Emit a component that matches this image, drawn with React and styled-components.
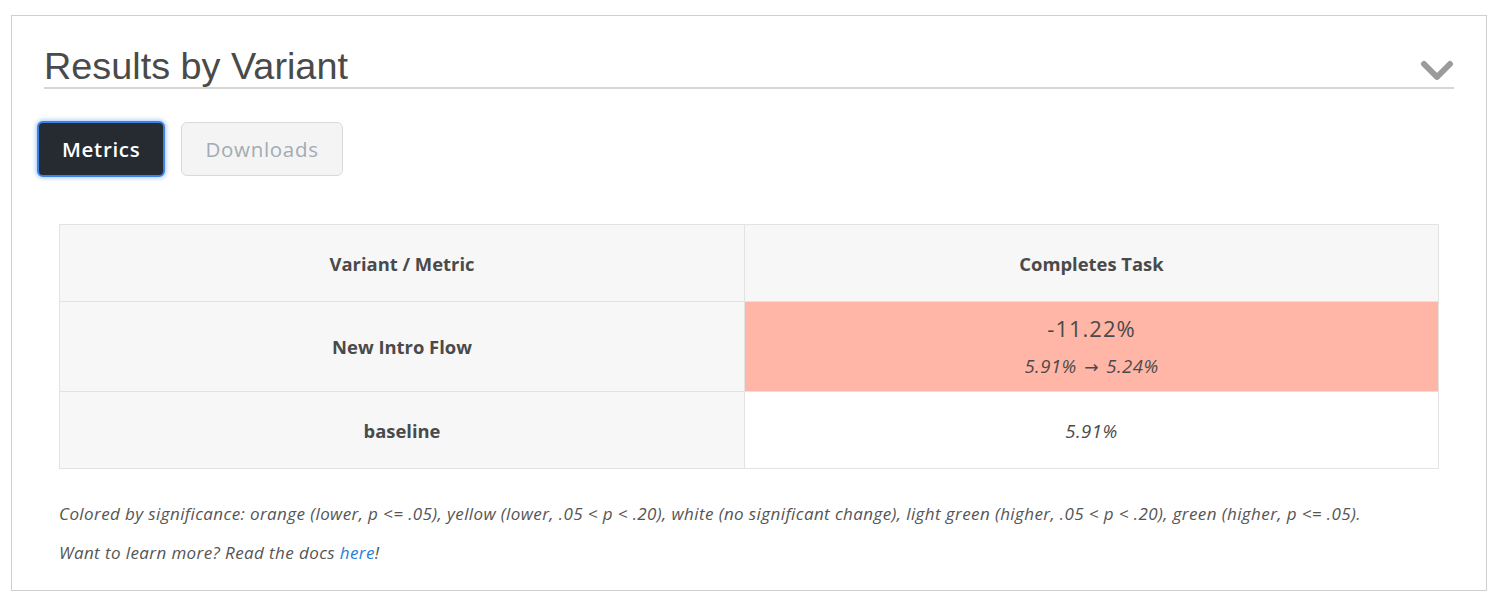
import React, { useState } from 'react'
import styled, { createGlobalStyle } from 'styled-components'

const GlobalStyle = createGlobalStyle`
  html, body {
    margin: 0;
    padding: 0;
    background: #fff;
  }
  body {
    font-family: "Open Sans", "Liberation Sans", sans-serif;
    color: #4a4a4a;
  }
`

const Page = styled.div`
  padding: 15px 13px 0 11px;
`

const Panel = styled.section`
  border: 1px solid #cfcfcf;
  padding: 30px 32px 0 25px;
  height: 576px;
  box-sizing: border-box;
`

const Header = styled.div`
  display: flex;
  align-items: flex-end;
  justify-content: space-between;
  border-bottom: 2px solid #d6d6d6;
  margin-left: 7px;
  height: 41px;
`

const Title = styled.h2`
  margin: 0;
  font-family: "Liberation Sans", Arial, sans-serif;
  font-weight: 400;
  font-size: 37.8px;
  line-height: 1;
  color: #4a4a4a;
  padding-bottom: 1px;
`

const Toggle = styled.button`
  border: 0;
  background: none;
  padding: 0;
  margin: 0 0 5px 0;
  cursor: pointer;
  display: flex;
`

const Tabs = styled.div`
  display: flex;
  gap: 16px;
  margin-top: 32px;
`

const Tab = styled.button`
  height: ${p => (p.$active ? '56px' : '54px')};
  box-sizing: border-box;
  padding: 0 23px;
  border-radius: 6px;
  font-family: "Open Sans", sans-serif;
  font-size: 20.5px;
  font-weight: ${p => (p.$active ? 600 : 400)};
  letter-spacing: 0.7px;
  cursor: pointer;
  background: ${p => (p.$active ? '#262a31' : '#f4f4f4')};
  color: ${p => (p.$active ? '#ffffff' : '#a3abb3')};
  border: ${p => (p.$active ? '2px solid #3b82e6' : '1px solid #d9d9d9')};
  box-shadow: ${p => (p.$active ? '0 0 4px 1px rgba(59,130,230,0.45)' : 'none')};
  margin-top: ${p => (p.$active ? '0' : '1px')};
`

const TableWrap = styled.div`
  margin: 47px 15px 0 22px;
`

const Table = styled.table`
  width: 100%;
  border-collapse: collapse;
  table-layout: fixed;
  border: 1px solid #e3e3e3;
`

const Col = styled.col`
  width: ${p => p.$w};
`

const Cell = styled.td`
  border: 1px solid #e3e3e3;
  text-align: center;
  vertical-align: middle;
  height: ${p => p.$h}px;
  padding: 0;
  background: ${p => p.$bg || '#fff'};
  font-size: ${p => (p.$italic ? '18.5px' : '18.4px')};
  font-weight: ${p => (p.$bold ? 700 : 400)};
  font-style: ${p => (p.$italic ? 'italic' : 'normal')};
  letter-spacing: ${p => (p.$italic ? '0.5px' : '0')};
  color: #4a4a4a;
`

const Change = styled.div`
  font-size: 22px;
  line-height: 1;
  margin-bottom: 18px;
  letter-spacing: 1px;
`

const Rates = styled.div`
  font-size: 18.5px;
  font-style: italic;
  line-height: 1;
  letter-spacing: 0.5px;
`

const Arrow = styled.span`
  font-family: "DejaVu Sans", sans-serif;
  font-style: normal;
  font-size: 17px;
  margin: 0 2px;
`

const Notes = styled.div`
  margin: 25px 0 0 22px;
  font-family: "Open Sans", sans-serif;
  font-style: italic;
  font-size: 17px;
  letter-spacing: 0.4px;
  color: #555;
  line-height: 39px;
`

const Note = styled.p`
  margin: 0;
  white-space: nowrap;
`

const DocLink = styled.a`
  color: #1f7ed8;
  text-decoration: none;
`

const Chevron = () => (
  <svg width="34" height="22" viewBox="0 0 34 22">
    <path d="M4 4 L17 17 L30 4" fill="none" stroke="#9b9b9b" strokeWidth="6" strokeLinecap="round" strokeLinejoin="round" />
  </svg>
)

const rows = [
  { name: 'New Intro Flow', change: '-11.22%', from: '5.91%', to: '5.24%', bg: '#ffb6a7', h: 89 },
  { name: 'baseline', value: '5.91%', h: 76 },
]

const App = () => {
  const [tab, setTab] = useState('metrics')

  return (
    <Page>
      <GlobalStyle />
      <Panel>
        <Header>
          <Title>Results by Variant</Title>
          <Toggle aria-label="collapse"><Chevron /></Toggle>
        </Header>
        <Tabs>
          <Tab $active={tab === 'metrics'} onClick={() => setTab('metrics')}>Metrics</Tab>
          <Tab $active={tab === 'downloads'} onClick={() => setTab('downloads')}>Downloads</Tab>
        </Tabs>
        <TableWrap>
          <Table>
            <colgroup>
              <Col $w="685px" />
              <Col $w="auto" />
            </colgroup>
            <tbody>
              <tr>
                <Cell as="th" $h={76} $bg="#f7f7f7" $bold>Variant / Metric</Cell>
                <Cell as="th" $h={76} $bg="#f7f7f7" $bold>Completes Task</Cell>
              </tr>
              {rows.map(r => (
                <tr key={r.name}>
                  <Cell $h={r.h} $bg="#f7f7f7" $bold>{r.name}</Cell>
                  {r.change ? (
                    <Cell $h={r.h} $bg={r.bg}>
                      <Change>{r.change}</Change>
                      <Rates>{r.from} <Arrow>→</Arrow> {r.to}</Rates>
                    </Cell>
                  ) : (
                    <Cell $h={r.h} $italic>{r.value}</Cell>
                  )}
                </tr>
              ))}
            </tbody>
          </Table>
        </TableWrap>
        <Notes>
          <Note>Colored by significance: orange (lower, p &lt;= .05), yellow (lower, .05 &lt; p &lt; .20), white (no significant change), light green (higher, .05 &lt; p &lt; .20), green (higher, p &lt;= .05).</Note>
          <Note>Want to learn more? Read the docs <DocLink href="#">here</DocLink>!</Note>
        </Notes>
      </Panel>
    </Page>
  )
}

export default App
